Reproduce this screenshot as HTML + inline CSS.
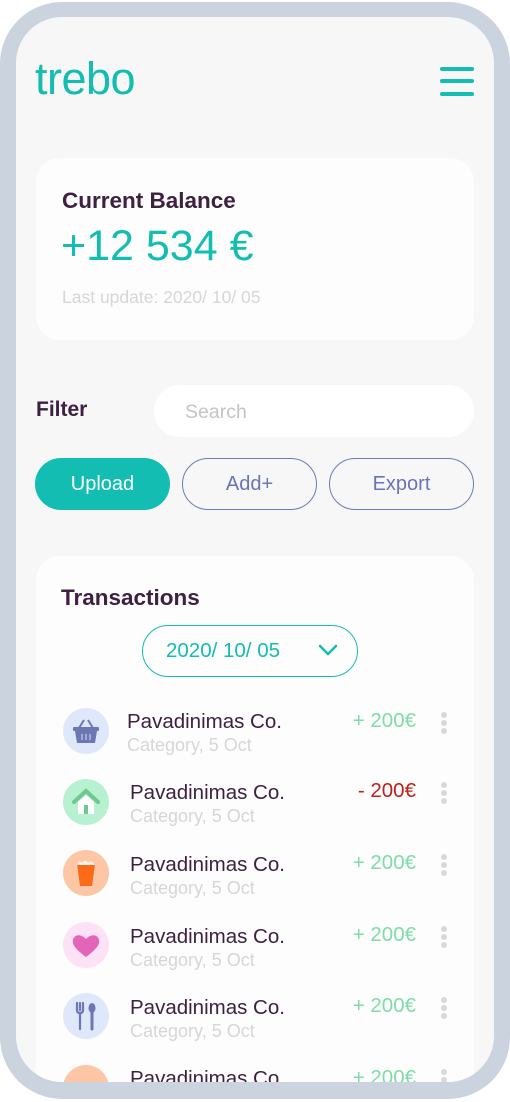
<!DOCTYPE html>
<html><head><meta charset="utf-8"><style>
*{margin:0;padding:0;box-sizing:border-box}
body{width:510px;height:1102px;background:#fff;font-family:"Liberation Sans",sans-serif;position:relative;overflow:hidden}
.frame{position:absolute;left:0;top:2px;width:510px;height:1097px;background:#cbd3df;border-radius:62px}
.inner{position:absolute;left:16px;top:17px;width:478px;height:1065px;background:#f7f7f7;border-radius:46px;overflow:hidden}
.a{position:absolute}
.card{background:#fdfdfd;border-radius:24px}
.btn{border-radius:26px;display:flex;align-items:center;justify-content:center;font-size:20px}
.name{font-size:20.5px;color:#3d2140}
.cat{font-size:18px;color:#d6d6d6}
.amt{font-size:20.5px;color:#7fdca8;text-align:right;width:110px}
.dots{width:6px}
.dots i{display:block;width:6px;height:6px;border-radius:3px;background:#d9d9d9;margin-bottom:2px}
.ic{width:46px;height:46px;border-radius:23px;display:flex;align-items:center;justify-content:center}
</style></head><body>
<div class="frame"></div>
<div class="inner">
<div class="a" style="left:19px;top:36px;font-size:45px;color:#13bdb1;letter-spacing:-0.5px">trebo</div>
<div class="a" style="left:424px;top:50px;width:34px;height:4px;background:#13bdb1;border-radius:2px"></div>
<div class="a" style="left:424px;top:62px;width:34px;height:4px;background:#13bdb1;border-radius:2px"></div>
<div class="a" style="left:424px;top:75px;width:34px;height:4px;background:#13bdb1;border-radius:2px"></div>

<div class="a card" style="left:20px;top:141px;width:438px;height:182px"></div>
<div class="a" style="left:46px;top:171px;font-size:22.5px;font-weight:bold;color:#3d2140">Current Balance</div>
<div class="a" style="left:45px;top:205px;font-size:43px;color:#13bdb1">+12 534 €</div>
<div class="a" style="left:46px;top:270px;font-size:17.5px;color:#d6d6d6">Last update: 2020/ 10/ 05</div>

<div class="a" style="left:20px;top:381px;font-size:21px;font-weight:bold;color:#3d2140">Filter</div>
<div class="a" style="left:138px;top:368px;width:320px;height:52px;background:#fff;border-radius:26px"></div>
<div class="a" style="left:169px;top:384px;font-size:19.5px;color:#c4c4c4">Search</div>

<div class="a btn" style="left:19px;top:441px;width:135px;height:52px;background:#13bdb1;color:#fff">Upload</div>
<div class="a btn" style="left:166px;top:441px;width:135px;height:52px;border:1.5px solid #7079bb;color:#6a74b5">Add+</div>
<div class="a btn" style="left:313px;top:441px;width:145px;height:52px;border:1.5px solid #7079bb;color:#6a74b5">Export</div>

<div class="a card" style="left:20px;top:539px;width:438px;height:600px"></div>
<div class="a" style="left:45px;top:568px;font-size:22.5px;font-weight:bold;color:#3d2140">Transactions</div>
<div class="a" style="left:126px;top:608px;width:216px;height:52px;border:1.5px solid #13bdb1;border-radius:26px"></div>
<div class="a" style="left:150px;top:622px;font-size:20.5px;color:#13bdb1">2020/ 10/ 05</div>
<svg class="a" style="left:301px;top:625px" width="22" height="16"><path d="M3 4l8 8 8-8" fill="none" stroke="#13bdb1" stroke-width="2.5" stroke-linecap="round"/></svg>

<div class="a ic" style="left:47px;top:691px;background:#dfe7fa"><svg width="30" height="26"><path d="M8 10L13 2M22 10L17 2" stroke="#6d77b3" stroke-width="2" fill="none"/><rect x="2" y="9" width="26" height="4" rx="1" fill="#6d77b3"/><path d="M4 13h22l-2 12H6z" fill="#6d77b3"/><path d="M11 16v6M15 16v6M19 16v6" stroke="#a3aad4" stroke-width="2"/></svg></div>
<div class="a name" style="left:111px;top:693px">Pavadinimas Co.</div>
<div class="a cat" style="left:111px;top:718px">Category, 5 Oct</div>
<div class="a amt" style="left:290px;top:692px">+ 200€</div>
<div class="a dots" style="left:425px;top:695px"><i></i><i></i><i></i></div>

<div class="a ic" style="left:47px;top:762px;background:#b8f0d2"><svg width="30" height="28"><path d="M3 14L15 3l12 11" stroke="#6dc98f" stroke-width="4" fill="none" stroke-linecap="round"/><path d="M7 14l8-7 8 7v12H7z" fill="#fff"/><rect x="13" y="17" width="4" height="9" fill="#6dc98f"/></svg></div>
<div class="a name" style="left:114px;top:764px">Pavadinimas Co.</div>
<div class="a cat" style="left:114px;top:789px">Category, 5 Oct</div>
<div class="a amt" style="left:290px;top:762px;color:#c21d1d">- 200€</div>
<div class="a dots" style="left:425px;top:765px"><i></i><i></i><i></i></div>

<div class="a ic" style="left:47px;top:833px;background:#fdc6a5"><svg width="26" height="30"><path d="M4 6h18l-3 22H7z" fill="#fb6a19"/><path d="M4 7c1-4 4-4 5-2 1-3 5-3 6 0 1-2 5-2 7 2z" fill="#fff2e8"/></svg></div>
<div class="a name" style="left:114px;top:836px">Pavadinimas Co.</div>
<div class="a cat" style="left:114px;top:861px">Category, 5 Oct</div>
<div class="a amt" style="left:290px;top:834px">+ 200€</div>
<div class="a dots" style="left:425px;top:837px"><i></i><i></i><i></i></div>

<div class="a ic" style="left:47px;top:905px;background:#fde1f5"><svg width="30" height="26"><path d="M15 25C4 17 1 12 2 8 3 3 9 1 15 7 21 1 27 3 28 8 29 12 26 17 15 25z" fill="#e365b9"/></svg></div>
<div class="a name" style="left:114px;top:908px">Pavadinimas Co.</div>
<div class="a cat" style="left:114px;top:933px">Category, 5 Oct</div>
<div class="a amt" style="left:290px;top:906px">+ 200€</div>
<div class="a dots" style="left:425px;top:909px"><i></i><i></i><i></i></div>

<div class="a ic" style="left:47px;top:976px;background:#dfe7fa"><svg width="26" height="30"><path d="M4 2v7c0 2 1 3 3 3v16M7 2v7M10 2v7c0 2-1 3-3 3" stroke="#6d77b3" stroke-width="2.2" fill="none" stroke-linecap="round"/><ellipse cx="19" cy="7" rx="3.5" ry="5" fill="#6d77b3"/><path d="M19 10v18" stroke="#6d77b3" stroke-width="3" stroke-linecap="round"/></svg></div>
<div class="a name" style="left:114px;top:979px">Pavadinimas Co.</div>
<div class="a cat" style="left:114px;top:1004px">Category, 5 Oct</div>
<div class="a amt" style="left:290px;top:977px">+ 200€</div>
<div class="a dots" style="left:425px;top:980px"><i></i><i></i><i></i></div>

<div class="a ic" style="left:47px;top:1048px;background:#fdc6a5"><svg width="30" height="20"><rect x="3" y="8" width="24" height="8" fill="#fb6a19"/><path d="M6 10v4M10 10v4M14 10v4M18 10v4M22 10v4" stroke="#fdc6a5" stroke-width="1.5"/></svg></div>
<div class="a name" style="left:114px;top:1050px">Pavadinimas Co.</div>
<div class="a amt" style="left:290px;top:1049px">+ 200€</div>
<div class="a dots" style="left:425px;top:1052px"><i></i><i></i><i></i></div>
</div>
</body></html>
